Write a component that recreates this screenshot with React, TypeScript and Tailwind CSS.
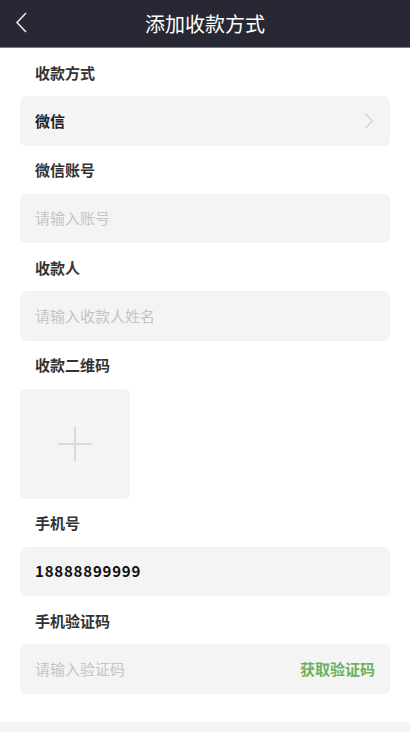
import React from 'react';

const font = { fontFamily: '"Noto Sans CJK SC", "Noto Sans", sans-serif' };

function Label({ children }: { children: React.ReactNode }) {
  return (
    <div className="h-[48px] flex items-center px-[35px] pt-[2px] text-[15px] font-bold text-[#333333]">
      {children}
    </div>
  );
}

function Field({ children }: { children: React.ReactNode }) {
  return (
    <div className="mx-[20px] h-[49.5px] rounded-[6px] bg-[#f4f4f4] flex items-center px-[15px] text-[15px]">
      {children}
    </div>
  );
}

export default function App() {
  return (
    <div className="w-[410px] h-[732px] bg-white overflow-hidden flex flex-col" style={font}>
      {/* Header */}
      <div className="relative h-[48px] bg-[#282834] border-b border-[#7a7a80] flex items-center justify-center shrink-0">
        <button className="absolute left-[14px] top-[11px]">
          <svg width="16" height="24" viewBox="0 0 16 24" fill="none">
            <path d="M12 2 L3 11.5 L12 21" stroke="#e8e8ec" strokeWidth="1.6" />
          </svg>
        </button>
        <span className="text-[20px] text-white leading-none">添加收款方式</span>
      </div>

      <Label>收款方式</Label>
      <Field>
        <span className="flex-1 font-bold text-[#222222]">微信</span>
        <svg width="10" height="16" viewBox="0 0 10 16" fill="none" className="mr-[1px]">
          <path d="M1.5 1 L8.5 8 L1.5 15" stroke="#cfcfcf" strokeWidth="1.2" />
        </svg>
      </Field>

      <Label>微信账号</Label>
      <Field>
        <span className="text-[#c4c4c4]">请输入账号</span>
      </Field>

      <Label>收款人</Label>
      <Field>
        <span className="text-[#c4c4c4]">请输入收款人姓名</span>
      </Field>

      <Label>收款二维码</Label>
      <div className="mx-[20px] w-[110px] h-[110px] rounded-[6px] bg-[#f4f4f4] flex items-center justify-center">
        <svg width="34" height="34" viewBox="0 0 34 34">
          <rect x="0" y="16" width="34" height="2" fill="#d9d9d9" />
          <rect x="16" y="0" width="2" height="34" fill="#d9d9d9" />
        </svg>
      </div>

      <Label>手机号</Label>
      <Field>
        <span className="font-bold text-[#111111] tracking-[0.8px]">18888899999</span>
      </Field>

      <Label>手机验证码</Label>
      <Field>
        <span className="flex-1 text-[#c4c4c4]">请输入验证码</span>
        <span className="font-bold text-[#6cb15b]">获取验证码</span>
      </Field>

      <div className="mt-[28px] flex-1 bg-[#f4f4f4]" />
    </div>
  );
}
